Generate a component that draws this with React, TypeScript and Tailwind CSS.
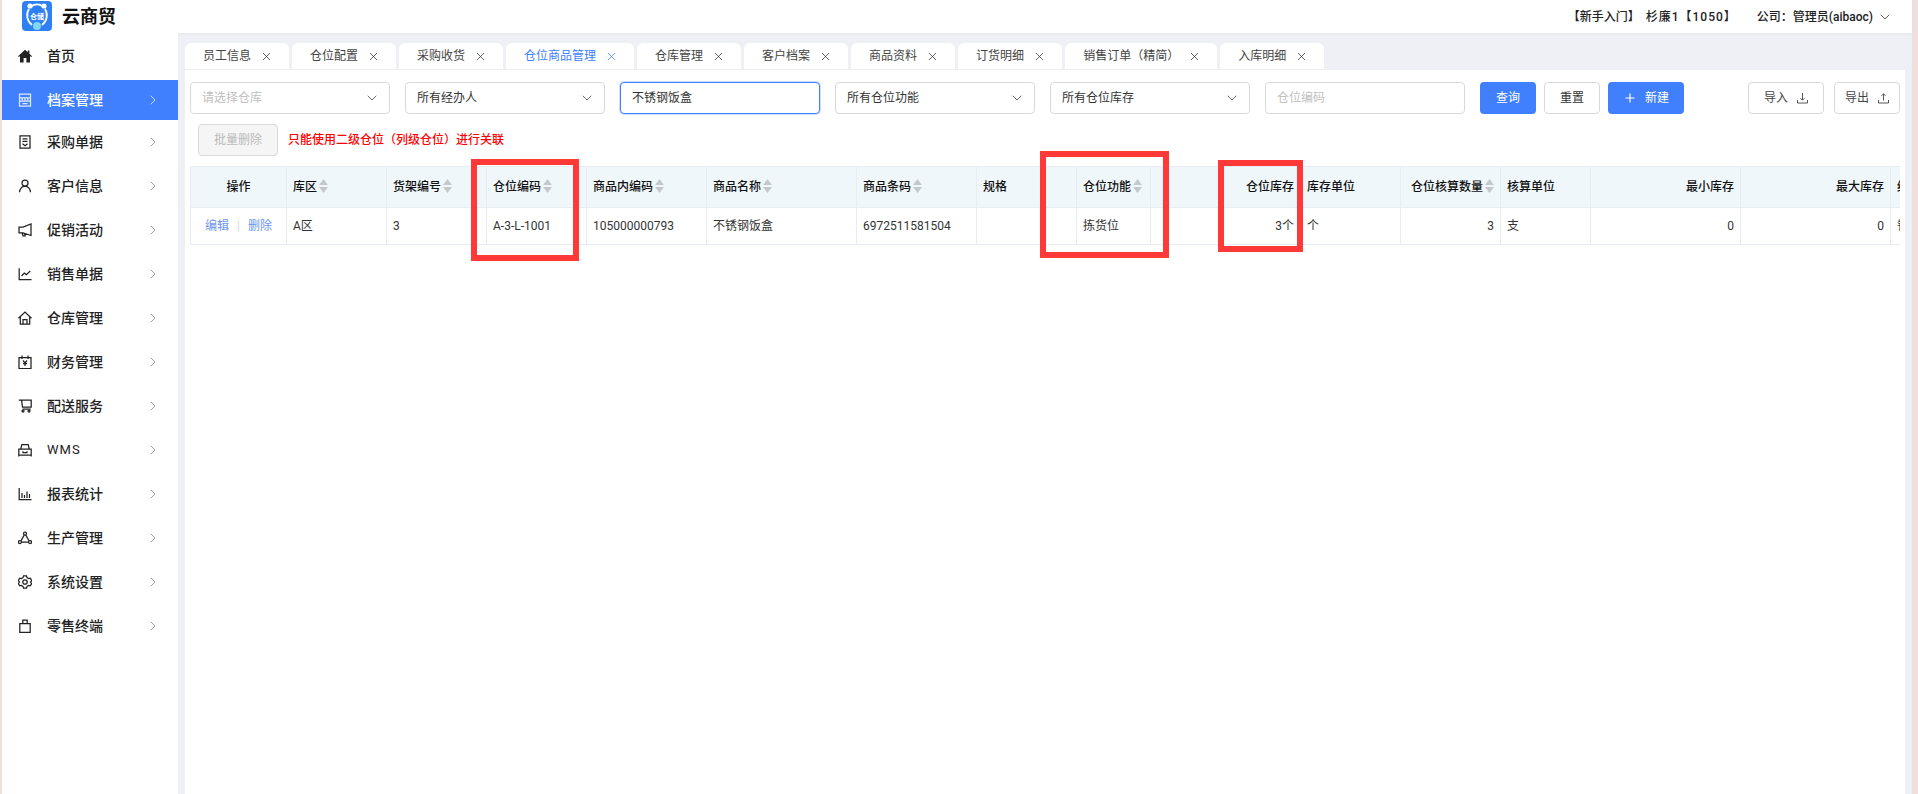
import { ChevronDown, ChevronRight, Plus, X } from "lucide-react";
import type { ReactNode } from "react";

const font = { sans: "font-['Roboto','Noto_Sans_CJK_SC',sans-serif]" };

const stroke = {
  fill: "none",
  stroke: "currentColor",
  strokeWidth: 1.25,
};

function Icon({ children }: { children: ReactNode }) {
  return (
    <svg width="14" height="14" viewBox="0 0 14 14" {...stroke} className="shrink-0">
      {children}
    </svg>
  );
}

const menu: { label: string; icon: ReactNode; active?: boolean; noArrow?: boolean }[] = [
  {
    label: "首页",
    noArrow: true,
    icon: (
      <svg width="14" height="14" viewBox="0 0 14 14" className="shrink-0" fill="currentColor">
        <path d="M7 .8 0 7.2l.8.9L2 7v6.4h3.600V9h2.800v4.400H12V7l1.200 1.100.8-.9-2.600-2.400V1.600H9.800v1.700z" />
      </svg>
    ),
  },
  {
    label: "档案管理",
    active: true,
    icon: (
      <Icon>
        <path d="M1.500 1h11v12h-11zM1.500 4.800h11M1.500 8h11M4.500 10.500h5M4.200 5v3M7 5v3M9.800 5v3" />
      </Icon>
    ),
  },
  {
    label: "采购单据",
    icon: (
      <Icon>
        <path d="M2 .8h10v12.400H2zM4.500 3.800h5M4.500 6.300h5M4.500 8.800 7 10.800l2.500-2" />
      </Icon>
    ),
  },
  {
    label: "客户信息",
    icon: (
      <Icon>
        <circle cx="7" cy="4" r="3" />
        <path d="M1.500 13.300c.2-3.400 2.500-6.300 5.500-6.300s5.300 2.900 5.500 6.300" />
      </Icon>
    ),
  },
  {
    label: "促销活动",
    icon: (
      <Icon>
        <path d="M13 1v11.500L5 9.800H1V4h4zM4 9.800l1 3h2.200l-.7-2.400" />
      </Icon>
    ),
  },
  {
    label: "销售单据",
    icon: (
      <Icon>
        <path d="M1.200 1.200v11.300h12.300M3.500 9l2.800-3 2 1.600L12.300 4" />
      </Icon>
    ),
  },
  {
    label: "仓库管理",
    icon: (
      <Icon>
        <path d="M.5 7.200 7 1l6.500 6.200M2.300 6v7.200h9.400V6M5 13.200V8.500h4v4.700" />
      </Icon>
    ),
  },
  {
    label: "财务管理",
    icon: (
      <Icon>
        <path d="M1 2.500h12v11H1zM4 .5v3.500M10 .5v3.500M5 5.500 7 8l2-2.500M5 8.500h4M7 8v3" />
      </Icon>
    ),
  },
  {
    label: "配送服务",
    icon: (
      <Icon>
        <path d="M.8 1.200h2.800h9.600v6.800H4.500L3.600 1.200M4.500 10h8.200" />
        <circle cx="5" cy="12" r="1" />
        <circle cx="11" cy="12" r="1" />
      </Icon>
    ),
  },
  {
    label: "WMS",
    icon: (
      <Icon>
        <path d="M2.800 6 3.800 1.500h6.400l1 4.500M.8 6h12.400v6H.8zM.8 12v1.500M13.200 12v1.500M5 8.300v1.200h4V8.300" />
      </Icon>
    ),
  },
  {
    label: "报表统计",
    icon: (
      <Icon>
        <path d="M1.200 1v11.500h12.300M4 11V6M6.500 11V8M9 11V4.500M11.500 11V7" />
      </Icon>
    ),
  },
  {
    label: "生产管理",
    icon: (
      <Icon>
        <circle cx="7" cy="2.500" r="1.500" />
        <circle cx="2" cy="11" r="1.500" />
        <circle cx="12" cy="11" r="1.500" />
        <path d="M6.300 3.900 3 9.700M7.700 3.900l3.300 5.800M3.500 11h7" />
      </Icon>
    ),
  },
  {
    label: "系统设置",
    icon: (
      <Icon>
        <path d="M5.500 .8h3l.5 1.800 1.600.9 1.700-.4 1.400 2.500L12.500 7l1.200 1.400-1.400 2.500-1.700-.4-1.600.9-.5 1.800h-3L5 11.400l-1.600-.9-1.700.4L.3 8.400 1.500 7 .3 5.600l1.400-2.500 1.700.4L5 2.600z" />
        <circle cx="7" cy="7" r="2.200" />
      </Icon>
    ),
  },
  {
    label: "零售终端",
    icon: (
      <Icon>
        <path d="M1.800 4.500h10.400v8.800H1.800zM4.800 4.500V1h4.400v3.500" />
      </Icon>
    ),
  },
];

const tabs = [
  "员工信息",
  "仓位配置",
  "采购收货",
  "仓位商品管理",
  "仓库管理",
  "客户档案",
  "商品资料",
  "订货明细",
  "销售订单（精简）",
  "入库明细",
];

type Col = { title: string; w: number; value?: ReactNode; sort?: boolean; align?: "right" | "center" };

const columns: Col[] = [
  {
    title: "操作",
    w: 96,
    align: "center",
    value: (
      <span className="text-[#6b96ee]">
        编辑<span className="mx-[8px] text-[#d9d9d9]">|</span>删除
      </span>
    ),
  },
  { title: "库区", w: 100, sort: true, value: "A区" },
  { title: "货架编号", w: 100, sort: true, value: "3" },
  { title: "仓位编码", w: 100, sort: true, value: "A-3-L-1001" },
  { title: "商品内编码", w: 120, sort: true, value: "105000000793" },
  { title: "商品名称", w: 150, sort: true, value: "不锈钢饭盒" },
  { title: "商品条码", w: 120, sort: true, value: "6972511581504" },
  { title: "规格", w: 100 },
  { title: "仓位功能", w: 74, sort: true, value: "拣货位" },
  { title: "仓位库存", w: 150, align: "right", value: "3个" },
  { title: "库存单位", w: 100, value: "个" },
  { title: "仓位核算数量", w: 100, sort: true, align: "right", value: "3" },
  { title: "核算单位", w: 90, value: "支" },
  { title: "最小库存", w: 150, align: "right", value: "0" },
  { title: "最大库存", w: 150, align: "right", value: "0" },
  { title: "经销商", w: 100, value: "销" },
];

function SortIcon() {
  return (
    <svg width="9" height="14" viewBox="0 0 9 14" className="ml-[2px] -mt-[3px] shrink-0" fill="#c4c8cc">
      <path d="M4.500 0 9 6H0zM0 8h9l-4.500 6z" />
    </svg>
  );
}

function Select({ label, placeholder }: { label: string; placeholder?: boolean }) {
  return (
    <div className="flex h-[32px] w-[200px] shrink-0 items-center justify-between rounded-[4px] border border-[#d9d9d9] bg-white pl-[11px] pr-[9px]">
      <span className={placeholder ? "text-[#bfbfbf]" : "text-[#333]"}>{label}</span>
      <ChevronDown size={16} strokeWidth={1.2} className="text-[#444]" />
    </div>
  );
}

function Logo() {
  return (
    <svg width="30" height="30" viewBox="0 0 30 30" className="-mt-[1px] shrink-0">
      <rect width="30" height="30" rx="4" fill="#2f80f5" />
      <path d="M7 8a12 12 0 0 0 3 16M23 8a12 12 0 0 1-3 16M9 5.500a10 10 0 0 1 12 0" fill="none" stroke="#fff" strokeWidth="1.800" />
      <circle cx="8" cy="5" r="2.600" fill="#fff" />
      <circle cx="22" cy="5" r="2.600" fill="#fff" />
      <circle cx="15" cy="25" r="4" fill="#7fd6f5" />
      <text x="15" y="18" textAnchor="middle" fontSize="7" fontWeight="700" fill="#fff">
        仓储
      </text>
    </svg>
  );
}

function RedBox({ className }: { className: string }) {
  return <div className={`pointer-events-none absolute border-[6px] border-[#ff3838] ${className}`} />;
}

export default function App() {
  return (
    <div className={`relative h-[794px] w-[1918px] overflow-hidden bg-[#efe0e0] pl-[2px] pr-[6px] text-[12px] ${font.sans}`}>
      <div className="flex h-full flex-col bg-[#eff0f5]">
        {/* Top bar */}
        <header className="flex h-[33px] shrink-0 items-center bg-white pl-[20px] pr-[19px] shadow-[0_1px_2px_rgba(0,0,0,0.04)]">
          <Logo />
          <span className="ml-[10px] text-[18px] font-bold text-[#111]">云商贸</span>
          <div className="ml-auto flex items-center font-medium text-[#222]">
            <span>【新手入门】</span>
            <span className="ml-[6px] tracking-[1px]">杉廉1【1050】</span>
            <span className="ml-[20px]">公司：管理员(aibaoc)</span>
            <ChevronDown size={16} strokeWidth={1.1} className="ml-[4px]" />
          </div>
        </header>

        <div className="flex min-h-0 flex-1">
          {/* Sidebar */}
          <aside className="w-[176px] shrink-0 bg-white pt-[3px]">
            <ul className="flex flex-col gap-[4px]">
              {menu.map((item, i) => (
                <li
                  key={item.label}
                  className={`flex h-[40px] items-center pl-[16px] pr-[17px] text-[14px] font-medium ${
                    item.active ? "bg-[#4080ff] text-white" : "text-[#222]"
                  } ${i === 2 ? "-mt-[2px]" : ""}`}
                >
                  <span className={item.active ? "text-[#dce8ff]" : "text-[#222]"}>{item.icon}</span>
                  <span className={`ml-[15px] ${item.label === "WMS" ? "tracking-[1px] font-normal text-[13px]" : ""}`}>{item.label}</span>
                  {!item.noArrow && (
                    <ChevronRight size={16} strokeWidth={1.3} className={`ml-auto ${item.active ? "text-[#dce8ff]" : "text-[#8a8a8a]"}`} />
                  )}
                </li>
              ))}
            </ul>
          </aside>

          <main className="ml-[7px] mr-[7px] flex min-w-0 flex-1 flex-col">
            {/* Tabs */}
            <div className="flex h-[37px] shrink-0 items-end gap-[3px] pb-[1px]">
              {tabs.map((t) => {
                const on = t === "仓位商品管理";
                return (
                  <div
                    key={t}
                    className={`flex h-[26px] items-center rounded-t-[6px] bg-white pl-[18px] pr-[16px] ${on ? "text-[#4080ff]" : "text-[#444]"}`}
                  >
                    <span>{t}</span>
                    <X size={13} strokeWidth={1.4} className={`ml-[9px] ${on ? "" : "text-[#333]"}`} />
                  </div>
                );
              })}
            </div>

            {/* Panel */}
            <section className="min-h-0 flex-1 bg-white pl-[5px] pr-[5px] pt-[12px]">
              <div className="flex items-center">
                <div className="flex gap-[15px]">
                  <Select label="请选择仓库" placeholder />
                  <Select label="所有经办人" />
                  <div className="flex h-[32px] w-[200px] items-center rounded-[4px] border border-[#4080ff] bg-white pl-[11px] text-[#333] shadow-[0_0_0_1px_rgba(64,128,255,0.25)]">
                    不锈钢饭盒
                  </div>
                  <Select label="所有仓位功能" />
                  <Select label="所有仓位库存" />
                  <div className="flex h-[32px] w-[200px] items-center rounded-[4px] border border-[#d9d9d9] pl-[11px] text-[#bfbfbf]">
                    仓位编码
                  </div>
                </div>
                <button className="ml-[15px] h-[32px] w-[56px] rounded-[4px] bg-[#4080ff] text-white">查询</button>
                <button className="ml-[8px] h-[32px] w-[56px] rounded-[4px] border border-[#d9d9d9] text-[#333]">重置</button>
                <button className="ml-[8px] flex h-[32px] w-[76px] items-center justify-center rounded-[4px] bg-[#4080ff] text-white">
                  <Plus size={14} strokeWidth={2} />
                  <span className="ml-[8px]">新建</span>
                </button>
                <button className="ml-auto flex h-[32px] w-[76px] items-center justify-center rounded-[4px] border border-[#d9d9d9] text-[#444]">
                  导入
                  <svg width="11" height="11" viewBox="0 0 11 11" className="ml-[9px]" fill="none" stroke="#555" strokeWidth="1">
                    <path d="M5.500 0v7M3.500 5.200l2 2 2-2M.5 7v3h10V7" />
                  </svg>
                </button>
                <button className="ml-[10px] flex h-[32px] w-[66px] items-center justify-center rounded-[4px] border border-[#d9d9d9] text-[#444]">
                  导出
                  <svg width="11" height="11" viewBox="0 0 11 11" className="ml-[9px]" fill="none" stroke="#555" strokeWidth="1">
                    <path d="M5.500 7.500V.8M3.500 2.800l2-2 2 2M.5 7v3h10V7" />
                  </svg>
                </button>
              </div>

              <div className="mt-[10px] flex items-center pl-[8px]">
                <button className="h-[32px] w-[80px] rounded-[4px] border border-[#d9d9d9] bg-[#f5f5f5] text-[#bbb]">批量删除</button>
                <span className="ml-[10px] font-medium text-[#ff0000]">只能使用二级仓位（列级仓位）进行关联</span>
              </div>

              {/* Table */}
              <div className="mt-[10px] overflow-hidden">
                <table className="table-fixed border-collapse" style={{ width: columns.reduce((s, c) => s + c.w, 0) }}>
                  <colgroup>
                    {columns.map((c) => (
                      <col key={c.title} style={{ width: c.w }} />
                    ))}
                  </colgroup>
                  <thead>
                    <tr className="h-[41px] bg-[#f0f7fb]">
                      {columns.map((c) => (
                        <th key={c.title} className="border border-[#e8edf3] px-[6px] font-medium text-[#111]">
                          <div
                            className={`flex items-center whitespace-nowrap ${
                              c.align === "right" ? "justify-end" : c.align === "center" ? "justify-center" : ""
                            }`}
                          >
                            {c.title}
                            {c.sort && <SortIcon />}
                          </div>
                        </th>
                      ))}
                    </tr>
                  </thead>
                  <tbody>
                    <tr className="h-[37px]">
                      {columns.map((c) => (
                        <td
                          key={c.title}
                          className={`whitespace-nowrap border border-[#e8edf3] px-[6px] text-[#333] ${
                            c.align === "right" ? "text-right" : c.align === "center" ? "text-center" : "text-left"
                          }`}
                        >
                          {c.value}
                        </td>
                      ))}
                    </tr>
                  </tbody>
                </table>
              </div>
            </section>
          </main>
        </div>
      </div>

      {/* Red annotation boxes drawn over the screenshot */}
      <RedBox className="left-[471px] top-[159px] h-[102px] w-[108px]" />
      <RedBox className="left-[1040px] top-[151px] h-[107px] w-[129px]" />
      <RedBox className="left-[1218px] top-[160px] h-[92px] w-[85px]" />
    </div>
  );
}
